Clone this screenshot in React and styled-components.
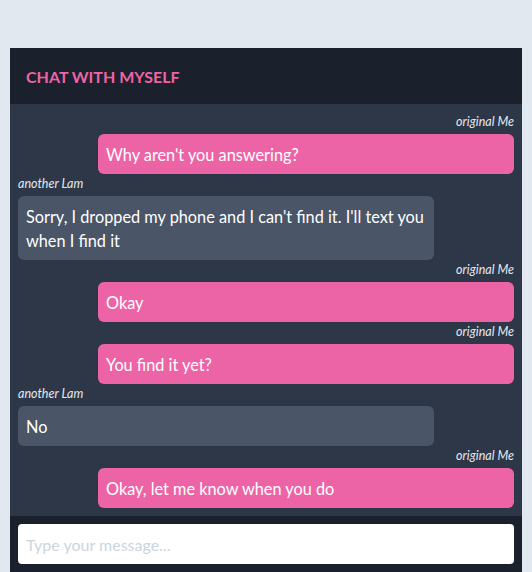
import React from 'react'
import styled, { createGlobalStyle } from 'styled-components'

const messages = [
  { from: 'me', name: 'original Me', text: "Why aren't you answering?" },
  {
    from: 'other',
    name: 'another Lam',
    text: "Sorry, I dropped my phone and I can't find it. I'll text you when I find it",
  },
  { from: 'me', name: 'original Me', text: 'Okay' },
  { from: 'me', name: 'original Me', text: 'You find it yet?' },
  { from: 'other', name: 'another Lam', text: 'No' },
  { from: 'me', name: 'original Me', text: 'Okay, let me know when you do' },
]

const GlobalStyle = createGlobalStyle`
  body {
    margin: 0;
    background: #e2e8f0;
    font-family: Lato, 'Open Sans', sans-serif;
  }
`

const App = () => {
  return (
    <>
      <GlobalStyle />
      <Page>
        <ChatWindow>
          <Header>
            <Title>Chat with myself</Title>
          </Header>
          <MessageList>
            {messages.map((msg, index) => (
              <Message key={index} $mine={msg.from === 'me'}>
                <Author>{msg.name}</Author>
                <Bubble $mine={msg.from === 'me'}>{msg.text}</Bubble>
              </Message>
            ))}
          </MessageList>
          <Footer>
            <Input placeholder="Type your message..." />
          </Footer>
        </ChatWindow>
      </Page>
    </>
  )
}

const Page = styled.div`
  padding: 48px 10px 0;
`

const ChatWindow = styled.div`
  width: 512px;
  margin: 0 auto;
  display: flex;
  flex-direction: column;
  background: #2d3748;
`

const Header = styled.div`
  height: 56px;
  display: flex;
  align-items: center;
  padding: 0 16px;
  background: #1a202c;
`

const Title = styled.h1`
  margin: 0;
  font-size: 16px;
  font-weight: bold;
  text-transform: uppercase;
  color: #ed64a6;
`

const MessageList = styled.div`
  display: flex;
  flex-direction: column;
  padding: 8px;
`

const Message = styled.div`
  display: flex;
  flex-direction: column;
  align-items: ${({ $mine }) => ($mine ? 'flex-end' : 'flex-start')};
`

const Author = styled.span`
  padding-top: 1px;
  margin-bottom: 3px;
  font-size: 12.5px;
  line-height: 18px;
  font-style: italic;
  color: #e2e8f0;
`

const Bubble = styled.div`
  box-sizing: border-box;
  width: calc(100% - 80px);
  padding: 9px 8px 7px;
  border-radius: 6px;
  font-size: 16.3px;
  line-height: 24px;
  color: #fff;
  background: ${({ $mine }) => ($mine ? '#ed64a6' : '#4a5568')};
`

const Footer = styled.div`
  padding: 8px 8px 12px;
  background: #1a202c;
`

const Input = styled.input`
  box-sizing: border-box;
  width: 100%;
  height: 40px;
  padding: 0 8px;
  border: none;
  border-radius: 4px;
  font-family: inherit;
  font-size: 16px;
  outline: none;

  &::placeholder {
    color: #cbd5e0;
  }
`

export default App
